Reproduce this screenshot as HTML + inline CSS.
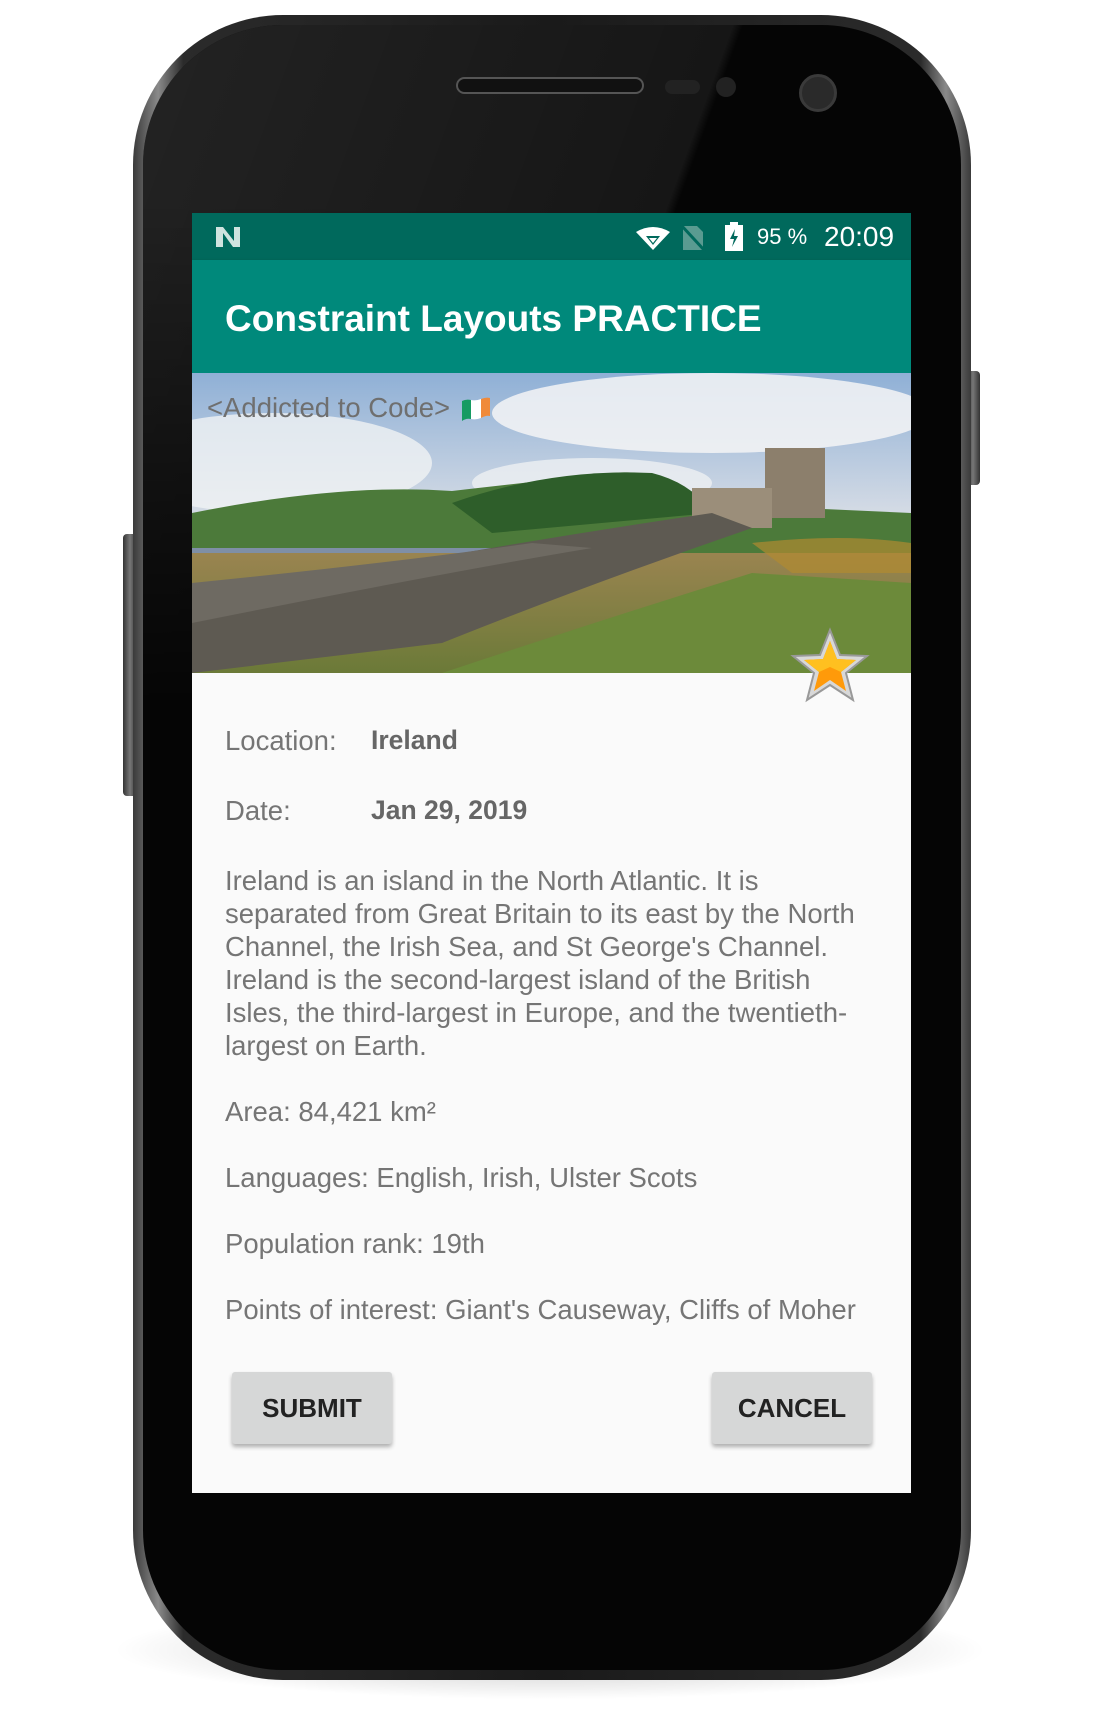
<!DOCTYPE html>
<html><head><meta charset="utf-8"><style>
*{margin:0;padding:0;box-sizing:border-box}
body{width:1101px;height:1709px;background:#fff;position:relative;overflow:hidden;font-family:"Liberation Sans",sans-serif}
.abs{position:absolute}
.txt{position:absolute;left:225px;color:#757575;font-size:27.5px;white-space:nowrap;line-height:33px}
.val{position:absolute;left:371px;color:#666;font-weight:bold;font-size:26.5px;white-space:nowrap;line-height:33px}
.btn{position:absolute;top:1372px;height:72px;width:160px;background:#d6d7d7;border-radius:3px;box-shadow:0 3px 4px rgba(0,0,0,.3);font-size:26px;color:#222;text-align:center;line-height:72px;font-weight:bold}
</style></head><body>
<div class="abs" style="left:110px;top:1600px;width:880px;height:100px;border-radius:50%;background:radial-gradient(ellipse at center,rgba(0,0,0,.25),rgba(0,0,0,0) 70%)"></div>
<div class="abs" style="left:966px;top:371px;width:14px;height:114px;background:linear-gradient(90deg,#333,#777,#333);border-radius:4px"></div>
<div class="abs" style="left:123px;top:534px;width:14px;height:262px;background:linear-gradient(90deg,#333,#777,#333);border-radius:4px"></div>
<div class="abs" style="left:133px;top:15px;width:838px;height:1665px;border-radius:150px;background:linear-gradient(90deg,#3a3a3a,#8a8a8a 3%,#2b2b2b 6%,#1a1a1a 50%,#2b2b2b 94%,#8a8a8a 97%,#3a3a3a)"></div>
<div class="abs" style="left:143px;top:25px;width:818px;height:1645px;border-radius:140px;background:#050505"></div>
<div class="abs" style="left:143px;top:25px;width:818px;height:700px;border-radius:140px 140px 0 0;background:linear-gradient(110deg,rgba(255,255,255,.12) 0%,rgba(255,255,255,.07) 55%,rgba(255,255,255,0) 56%);-webkit-mask-image:linear-gradient(180deg,#000 25%,transparent 100%);mask-image:linear-gradient(180deg,#000 25%,transparent 100%)"></div>
<div class="abs" style="left:456px;top:77px;width:188px;height:17px;border-radius:9px;background:#111;border:2px solid #555"></div>
<div class="abs" style="left:665px;top:80px;width:35px;height:14px;border-radius:7px;background:#222"></div>
<div class="abs" style="left:716px;top:77px;width:20px;height:20px;border-radius:50%;background:#222"></div>
<div class="abs" style="left:799px;top:74px;width:38px;height:38px;border-radius:50%;background:#2a2a2a;border:3px solid #3a3a3a"></div>
<div class="abs" style="left:192px;top:213px;width:719px;height:1280px;background:#fafafa;overflow:hidden">
 <div class="abs" style="left:0;top:0;width:719px;height:47px;background:#00695c"></div>
 <div class="abs" style="left:0;top:47px;width:719px;height:113px;background:#00897b;box-shadow:0 2px 4px rgba(0,0,0,.3)"></div>
 <svg class="abs" style="left:22px;top:12px" width="30" height="24" viewBox="0 0 30 24"><path d="M2 2h7l11 14V2h6v20h-7L9 8v14H2z" fill="#cfe3df"/></svg>
 <svg class="abs" style="left:443px;top:13px" width="36" height="24" viewBox="0 0 36 24"><path d="M1 6Q18-4 35 6L18 24z" fill="#fff"/><path d="M11 10h14l-7 9z" fill="#00695c"/><path d="M14 12h8l-4 5z" fill="#fff"/></svg>
 <svg class="abs" style="left:488px;top:11px" width="26" height="28" viewBox="0 0 26 28"><path d="M3 2h14l6 6v18H3z" fill="#5a9b91"/><path d="M1 1L25 27" stroke="#00695c" stroke-width="3"/></svg>
 <svg class="abs" style="left:532px;top:9px" width="20" height="30" viewBox="0 0 20 30"><rect x="6" y="0" width="8" height="3" fill="#fff"/><rect x="1" y="3" width="18" height="26" fill="#fff"/><path d="M11 7l-5 10h4l-2 8 6-11h-4z" fill="#00695c"/></svg>
 <div class="abs" style="left:565px;top:11px;color:#fff;font-size:22px">95 %</div>
 <div class="abs" style="left:632px;top:8px;color:#fff;font-size:28px">20:09</div>
 <div class="abs" style="left:33px;top:85px;color:#fff;font-size:37px;font-weight:bold;white-space:nowrap">Constraint Layouts PRACTICE</div>
 <svg class="abs" style="left:0;top:160px" width="719" height="300" viewBox="0 0 719 300">
  <defs>
   <linearGradient id="sky" x1="0" y1="0" x2="0" y2="1"><stop offset="0" stop-color="#8fb0d6"/><stop offset=".5" stop-color="#d9dee6"/><stop offset="1" stop-color="#c4ccd6"/></linearGradient>
   <linearGradient id="gr" x1="0" y1="0" x2="0" y2="1"><stop offset="0" stop-color="#9a8450"/><stop offset="1" stop-color="#6b7a38"/></linearGradient>
  </defs>
  <rect width="719" height="300" fill="url(#sky)"/>
  <ellipse cx="80" cy="90" rx="160" ry="50" fill="#f0f2f4" opacity=".8"/>
  <ellipse cx="520" cy="40" rx="220" ry="40" fill="#f4f5f6" opacity=".85"/>
  <ellipse cx="400" cy="110" rx="120" ry="25" fill="#eef0f2" opacity=".8"/>
  <path d="M0 140Q150 110 260 118Q330 110 420 100Q470 95 500 130L719 140V200H0z" fill="#4c7a3a"/>
  <path d="M260 130Q360 95 460 100Q500 110 520 140L300 160z" fill="#2e5e2a"/>
  <rect x="0" y="175" width="330" height="12" fill="#7f8fa6"/>
  <rect x="573" y="75" width="60" height="70" fill="#8c7f6c"/>
  <rect x="500" y="115" width="80" height="40" fill="#9b8e7a"/>
  <rect x="0" y="180" width="719" height="120" fill="url(#gr)"/>
  <path d="M0 230Q250 180 520 140L560 155Q400 210 250 270L0 300z" fill="#5e5a52"/>
  <path d="M0 210Q200 190 340 170L400 175Q250 200 0 250z" fill="#6e6a62"/>
  <path d="M250 300Q400 250 560 200L719 210V300z" fill="#6c8a3a"/>
  <path d="M560 170Q650 160 719 170V200H600z" fill="#b08a30" opacity=".7"/>
 </svg>
 <div class="abs" style="left:15px;top:179px;color:#6f6f6f;font-size:27.5px;white-space:nowrap">&lt;Addicted to Code&gt;</div>
 <svg class="abs" style="left:268px;top:182px" width="32" height="28" viewBox="0 0 32 28"><path d="M2 6Q6 4 11 5V24Q6 23 2 26z" fill="#169b62"/><path d="M11 5Q16 6 21 4V23Q16 25 11 24z" fill="#fff"/><path d="M21 4Q26 2 30 3V21Q26 20 21 23z" fill="#f08a3a"/></svg>
 <svg class="abs" style="left:598px;top:414px" width="80" height="78" viewBox="0 0 80 78"><path d="M40 3L50 28L77 29L56 46L63 73L40 58L17 73L24 46L3 29L30 28Z" fill="#d8d8d8" stroke="#999" stroke-width="2"/><path d="M40 14L47 32L66 33L51 45L56 64L40 53L24 64L29 45L14 33L33 32Z" fill="#ff9a0a"/><path d="M40 14L47 32L66 33L51 45L40 40L29 45L14 33L33 32Z" fill="#ffc020"/></svg>
</div>
<div class="txt" style="top:724px">Location:</div><div class="val" style="top:724px">Ireland</div>
<div class="txt" style="top:794px">Date:</div><div class="val" style="top:794px">Jan 29, 2019</div>
<div class="txt" style="top:864px">Ireland is an island in the North Atlantic. It is<br>separated from Great Britain to its east by the North<br>Channel, the Irish Sea, and St George's Channel.<br>Ireland is the second-largest island of the British<br>Isles, the third-largest in Europe, and the twentieth-<br>largest on Earth.</div>
<div class="txt" style="top:1095px">Area: 84,421 km²</div>
<div class="txt" style="top:1161px">Languages: English, Irish, Ulster Scots</div>
<div class="txt" style="top:1227px">Population rank: 19th</div>
<div class="txt" style="top:1293px">Points of interest: Giant's Causeway, Cliffs of Moher</div>
<div class="btn" style="left:232px">SUBMIT</div>
<div class="btn" style="left:712px">CANCEL</div>
</body></html>
